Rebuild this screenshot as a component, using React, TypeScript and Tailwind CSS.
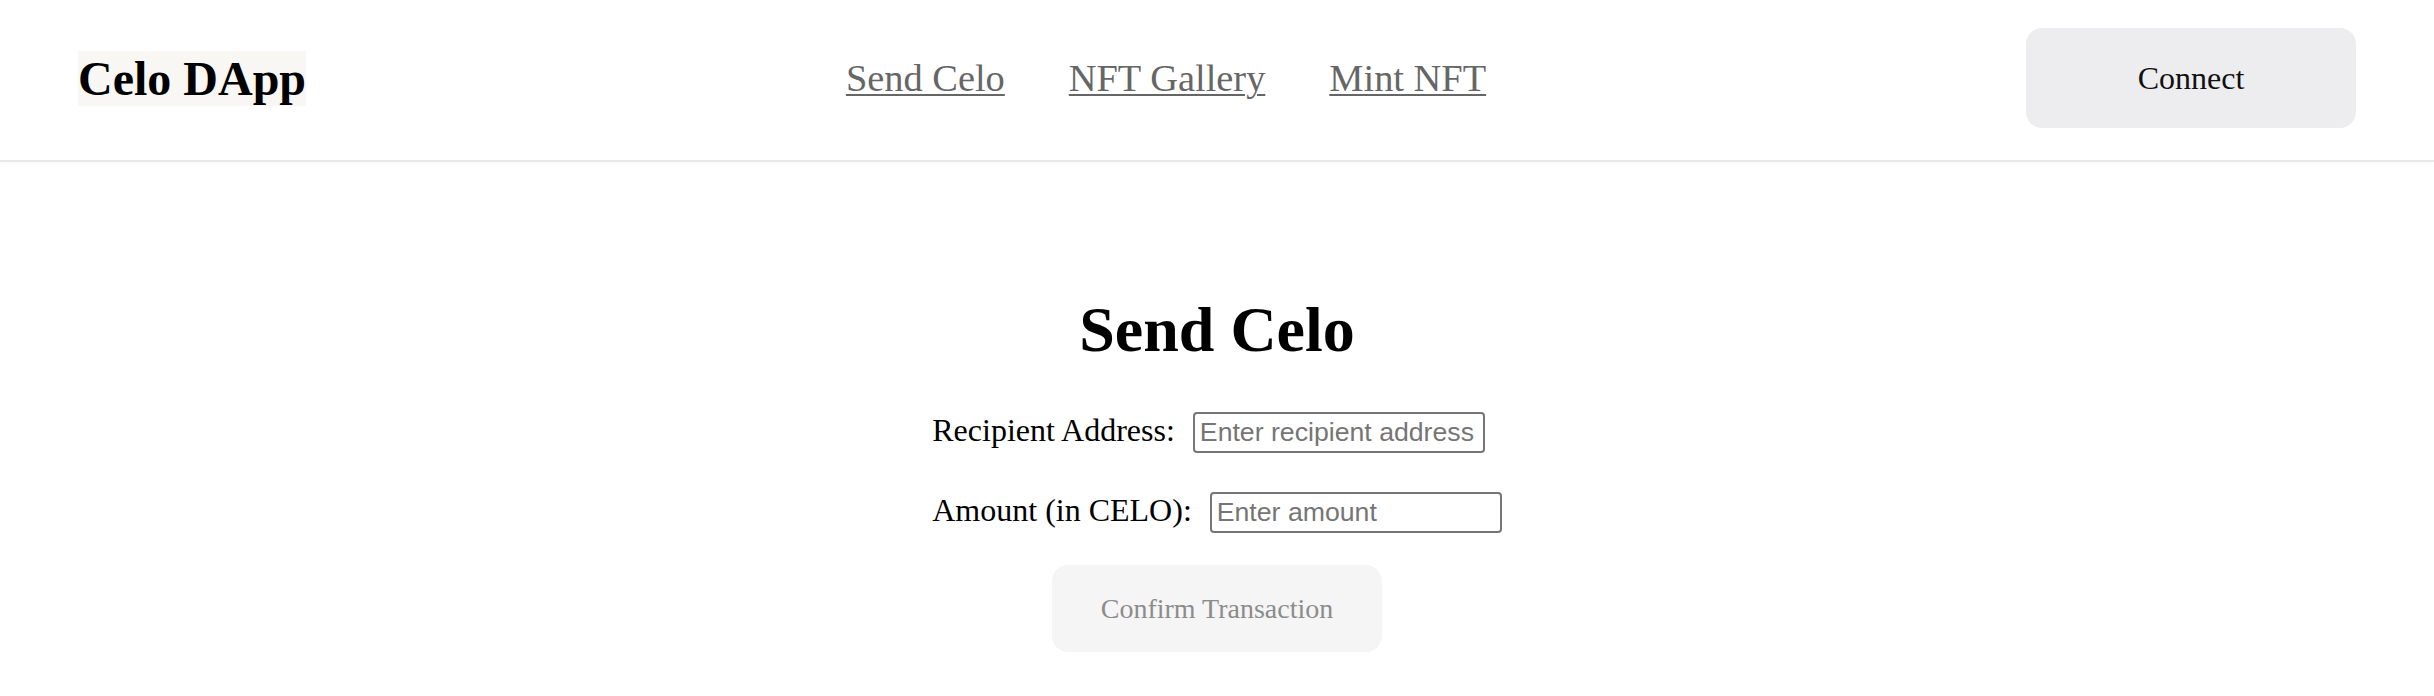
import React from "react";

export default function App() {
  return (
    <div className="min-h-[696px] w-full bg-white font-['Liberation_Serif','Times_New_Roman',serif] text-black">
      <header className="flex items-center justify-between border-b-2 border-[#e8e8e8] px-[78px] pt-[28px] pb-[32px] shadow-[0_2px_3px_rgba(0,0,0,0.02)]">
        <div className="bg-[#f9f7f3] text-[48px] font-bold leading-[55px]">Celo DApp</div>
        <nav className="flex items-center gap-[64px] text-[38.4px] leading-[44px]">
          <a href="#" className="text-[#666666] underline decoration-[2px] underline-offset-[3px]">Send Celo</a>
          <a href="#" className="text-[#666666] underline decoration-[2px] underline-offset-[3px]">NFT Gallery</a>
          <a href="#" className="text-[#666666] underline decoration-[2px] underline-offset-[3px]">Mint NFT</a>
        </nav>
        <button className="flex h-[100px] w-[330px] items-center justify-center rounded-[16px] bg-[#ededef] text-[32px] leading-[37px] text-[#111111]">
          Connect
        </button>
      </header>
      <main className="flex flex-col items-center pt-[131px]">
        <h1 className="text-[64px] font-bold leading-[74px]">Send Celo</h1>
        <div className="mt-[45px] flex w-fit flex-col items-start gap-[39px]">
          <div className="flex items-baseline">
            <label className="mr-[18px] text-[32px] leading-[37px]">Recipient Address:</label>
            <input
              type="text"
              placeholder="Enter recipient address"
              className="h-[41px] w-[292px] rounded-[4px] border-2 border-[#767676] px-[5px] font-['Liberation_Sans',Arial,sans-serif] text-[26.67px] placeholder:text-[#757575]"
            />
          </div>
          <div className="flex items-baseline">
            <label className="mr-[18px] text-[32px] leading-[37px]">Amount (in CELO):</label>
            <input
              type="text"
              placeholder="Enter amount"
              className="h-[41px] w-[292px] rounded-[4px] border-2 border-[#767676] px-[5px] font-['Liberation_Sans',Arial,sans-serif] text-[26.67px] placeholder:text-[#757575]"
            />
          </div>
        </div>
        <button
          disabled
          className="mt-[32px] flex h-[87px] w-[330px] items-center justify-center rounded-[16px] bg-[#f5f5f5] text-[28px] leading-[32px] text-[#8c8c8c]"
        >
          Confirm Transaction
        </button>
      </main>
    </div>
  );
}
